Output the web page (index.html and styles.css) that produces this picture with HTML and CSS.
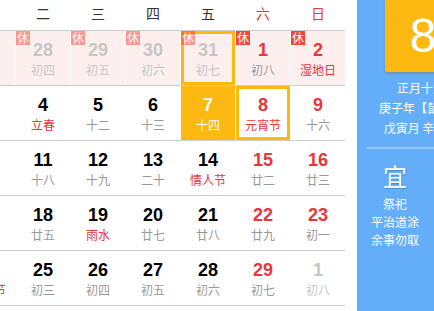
FILE: index.html
```html
<!DOCTYPE html>
<html lang="zh-CN">
<head>
<meta charset="utf-8">
<title>日历</title>
<link rel="stylesheet" href="styles.css">
</head>
<body>
<div class="page">
  <div class="cal">
    <div class="week">
      <span class="wd">一</span><span class="wd">二</span><span class="wd">三</span><span class="wd">四</span><span class="wd">五</span><span class="wd we">六</span><span class="wd we">日</span>
    </div>
    <div class="row">
      <div class="cell rest other"><span class="num">27</span><span class="lunar">初三</span><span class="badge">休</span></div>
      <div class="cell rest other"><span class="num">28</span><span class="lunar">初四</span><span class="badge">休</span></div>
      <div class="cell rest other"><span class="num">29</span><span class="lunar">初五</span><span class="badge">休</span></div>
      <div class="cell rest other"><span class="num">30</span><span class="lunar">初六</span><span class="badge">休</span></div>
      <div class="cell rest other hover"><span class="num">31</span><span class="lunar">初七</span><span class="badge">休</span></div>
      <div class="cell rest"><span class="num red">1</span><span class="lunar">初八</span><span class="badge">休</span></div>
      <div class="cell rest"><span class="num red">2</span><span class="lunar red">湿地日</span><span class="badge">休</span></div>
    </div>
    <div class="row">
      <div class="cell"><span class="num">3</span><span class="lunar">初十</span></div>
      <div class="cell"><span class="num">4</span><span class="lunar red">立春</span></div>
      <div class="cell"><span class="num">5</span><span class="lunar">十二</span></div>
      <div class="cell"><span class="num">6</span><span class="lunar">十三</span></div>
      <div class="cell today"><span class="num">7</span><span class="lunar">十四</span></div>
      <div class="cell selected"><span class="num red">8</span><span class="lunar red">元宵节</span></div>
      <div class="cell"><span class="num red">9</span><span class="lunar">十六</span></div>
    </div>
    <div class="row">
      <div class="cell"><span class="num">10</span><span class="lunar">十七</span></div>
      <div class="cell"><span class="num">11</span><span class="lunar">十八</span></div>
      <div class="cell"><span class="num">12</span><span class="lunar">十九</span></div>
      <div class="cell"><span class="num">13</span><span class="lunar">二十</span></div>
      <div class="cell"><span class="num">14</span><span class="lunar red">情人节</span></div>
      <div class="cell"><span class="num red">15</span><span class="lunar">廿二</span></div>
      <div class="cell"><span class="num red">16</span><span class="lunar">廿三</span></div>
    </div>
    <div class="row">
      <div class="cell"><span class="num">17</span><span class="lunar">廿四</span></div>
      <div class="cell"><span class="num">18</span><span class="lunar">廿五</span></div>
      <div class="cell"><span class="num">19</span><span class="lunar red">雨水</span></div>
      <div class="cell"><span class="num">20</span><span class="lunar">廿七</span></div>
      <div class="cell"><span class="num">21</span><span class="lunar">廿八</span></div>
      <div class="cell"><span class="num red">22</span><span class="lunar">廿九</span></div>
      <div class="cell"><span class="num red">23</span><span class="lunar">初一</span></div>
    </div>
    <div class="row">
      <div class="cell"><span class="num">24</span><span class="lunar red">龙头节</span></div>
      <div class="cell"><span class="num">25</span><span class="lunar">初三</span></div>
      <div class="cell"><span class="num">26</span><span class="lunar">初四</span></div>
      <div class="cell"><span class="num">27</span><span class="lunar">初五</span></div>
      <div class="cell"><span class="num">28</span><span class="lunar">初六</span></div>
      <div class="cell"><span class="num red">29</span><span class="lunar">初七</span></div>
      <div class="cell next"><span class="num">1</span><span class="lunar">初八</span></div>
    </div>
  </div>
  <div class="side">
    <div class="info">
      <div class="bigday">8</div>
      <div class="line">正月十六</div>
      <div class="line">庚子年【鼠年】</div>
      <div class="line">戊寅月 辛巳日</div>
    </div>
    <div class="divider"></div>
    <div class="yiji">
      <div class="col">
        <div class="tag">宜</div>
        <div class="item">祭祀</div>
        <div class="item">平治道涂</div>
        <div class="item">余事勿取</div>
      </div>
      <div class="col">
        <div class="tag">忌</div>
        <div class="item">诸事不宜</div>
      </div>
    </div>
  </div>
</div>
</body>
</html>
```
FILE: styles.css
```css
html, body {
  margin: 0;
  padding: 0;
  background: #fff;
}
body {
  font-family: "Liberation Sans", Arial, "Noto Sans CJK SC", sans-serif;
}
.page {
  width: 434px;
  height: 311px;
  overflow: hidden;
  display: flex;
  align-items: stretch;
}
.cal {
  flex: none;
  width: 385px;
  margin-left: -40px;
}
.week {
  display: flex;
  height: 30px;
  border-bottom: 1px solid #cdcdcd;
}
.wd {
  width: 54px;
  margin-left: 1px;
  text-align: center;
  font-family: "Noto Sans CJK SC", sans-serif;
  font-size: 14px;
  line-height: 27px;
  color: #333;
}
.wd.we {
  color: #e33b3b;
}
.row {
  display: flex;
  border-bottom: 1px solid #cdcdcd;
}
.cell {
  position: relative;
  width: 54px;
  height: 54px;
  margin-left: 1px;
  text-align: center;
  display: flex;
  flex-direction: column;
  align-items: center;
  white-space: nowrap;
}
.num {
  display: block;
  margin-top: 8px;
  font-size: 18px;
  font-weight: bold;
  line-height: 22px;
  color: #000;
}
.lunar {
  display: block;
  font-family: "Noto Sans CJK SC", sans-serif;
  font-size: 12px;
  line-height: 18px;
  color: #999;
}
.red {
  color: #e8363b;
}
.rest {
  background: #fdefed;
}
.badge {
  position: absolute;
  left: 0;
  top: 0;
  width: 14px;
  height: 14px;
  background: #f34637;
  color: #fff;
  font-family: "Noto Sans CJK SC", sans-serif;
  font-size: 12px;
  line-height: 14px;
  text-align: center;
}
.other .num,
.other .lunar,
.next .num,
.next .lunar {
  color: #c6c6c6;
}
.other .badge {
  opacity: 0.5;
}
.hover {
  box-shadow: inset 0 0 0 3px #fdb811;
}
.today {
  background: #fdb811;
}
.today .num,
.today .lunar {
  color: #fff;
}
.selected {
  background: #fff;
  box-shadow: inset 0 0 0 3px #fdb811;
}
.side {
  flex: none;
  width: 170px;
  margin-left: 12px;
  background: #64adf9;
  color: #fff;
  font-family: "Noto Sans CJK SC", sans-serif;
}
.info {
  width: 128px;
  display: flex;
  flex-direction: column;
  align-items: center;
}
.bigday {
  width: 72px;
  height: 72px;
  box-sizing: border-box;
  padding-left: 4px;
  background: #fdb811;
  box-shadow: 0 2px 2px rgba(120, 80, 0, 0.25);
  border-radius: 0 0 2px 2px;
  text-align: center;
  font-family: "Liberation Sans", Arial, sans-serif;
  font-size: 48px;
  line-height: 72px;
  color: #fff;
}
.line {
  font-size: 12px;
  line-height: 20px;
  white-space: nowrap;
}
.bigday + .line {
  margin-top: 6px;
}
.divider {
  height: 2px;
  margin: 9px 0 0 10px;
  background: #92c6fb;
}
.yiji {
  display: flex;
  gap: 22px;
  margin-left: 10px;
  margin-top: 12px;
}
.col {
  width: 56px;
  display: flex;
  flex-direction: column;
  align-items: center;
}
.tag {
  font-size: 24px;
  line-height: 30px;
  text-shadow: 1px 1px 1px rgba(20, 80, 160, 0.35);
}
.tag + .item {
  margin-top: 4px;
}
.item {
  font-size: 12px;
  line-height: 18px;
  white-space: nowrap;
}
```
